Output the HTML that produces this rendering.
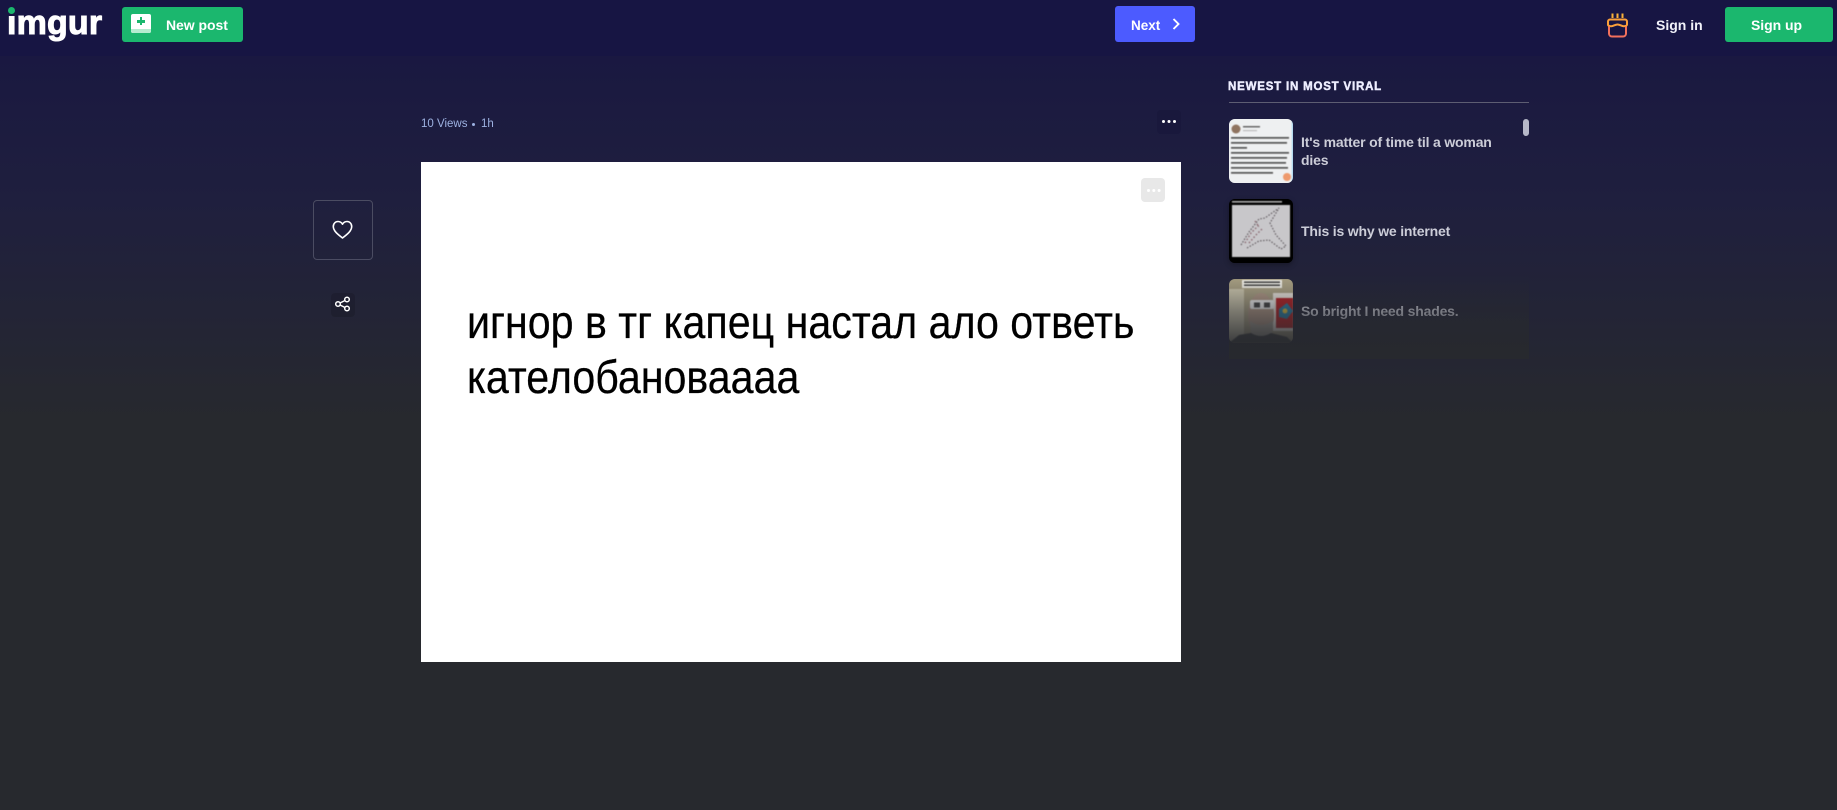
<!DOCTYPE html>
<html lang="en"><head><meta charset="utf-8"><title>imgur</title>
<style>
html,body{margin:0;padding:0;width:1837px;height:810px;overflow:hidden;background:#27292e}
body{position:relative;font-family:"Liberation Sans",sans-serif;color:#fff}
#bg{position:absolute;left:0;top:0;width:1837px;height:810px;background:linear-gradient(180deg,#171543 0,#1b1a40 90px,#1f1f3e 200px,#27292e 420px,#27292e 810px)}
#hdr{position:absolute;left:0;top:0;width:1837px;height:56px;background:#171543}
.a{position:absolute}
.btn{position:absolute;border-radius:3px;font-weight:700;font-size:14px;letter-spacing:-.1px}
.g{background:#1bb76e}
.t{position:absolute;white-space:nowrap;font-weight:700}
.thumb{position:absolute;left:1229px;width:64px;height:64px;border-radius:6px;overflow:hidden}
.thumb svg{filter:blur(.55px);display:block}
.side{letter-spacing:-.18px;color:#cccdd8;font-size:14px;line-height:18px}
.img{left:467px;font-size:46px;line-height:55px;color:#000;white-space:nowrap;transform-origin:0 0;transform:scaleX(.895);-webkit-text-stroke:.25px #000}
</style></head><body>
<div id="bg"></div>
<div id="hdr"></div>

<!-- logo -->
<div class="t a" style="left:7px;top:1px;font-size:34px;line-height:44px;letter-spacing:.15px;-webkit-text-stroke:1px #fff">imgur</div>
<div class="a" style="left:5px;top:3px;width:11.500px;height:13px;background:#171543"></div>
<div class="a" style="left:8px;top:7px;width:7px;height:7px;border-radius:50%;background:#1bb76e"></div>

<!-- new post -->
<div class="btn g" style="left:122px;top:7px;width:121px;height:35px"></div>
<div class="a" style="left:131px;top:14px;width:20px;height:19px;background:#fff;border-radius:2px;overflow:hidden"><div class="a" style="left:0;top:15px;width:20px;height:4px;background:#b5ecd0"></div>
<div class="a" style="left:6px;top:6px;width:8px;height:2.600px;background:#1bb76e"></div><div class="a" style="left:8.700px;top:3.300px;width:2.600px;height:8px;background:#1bb76e"></div></div>
<div class="t" style="left:166px;top:17px;font-size:14px;line-height:17px;letter-spacing:-.05px">New post</div>

<!-- next -->
<div class="btn" style="left:1115px;top:6px;width:80px;height:36px;background:#4c5bff"></div>
<div class="t" style="left:1131px;top:17px;font-size:13.500px;line-height:17px">Next</div>
<svg class="a" style="left:1170px;top:17px" width="12" height="14" viewBox="0 0 12 14"><path d="M3.500 2 L8.500 7 L3.500 12" fill="none" stroke="#fff" stroke-width="1.900"/></svg>

<!-- cake -->
<svg class="a" style="left:1604px;top:11px" width="27" height="28" viewBox="0 0 27 28" fill="none">
<path d="M8.500 2.500v4.500M13.500 2.500v4.500M18.500 2.500v4.500" stroke="#f9b13a" stroke-width="2"/>
<path d="M6 8.500h15a2 2 0 0 1 2 2v3c0 1.300-1.500 1.700-3.200 1.700-2.300 0-4-1.700-6.300-1.700s-4 1.700-6.300 1.700c-1.700 0-3.200-.4-3.200-1.700v-3a2 2 0 0 1 2-2z" stroke="#f99f3a" stroke-width="2"/>
<path d="M5 15.500v7a3 3 0 0 0 3 3h11a3 3 0 0 0 3-3v-7" stroke="#f2705c" stroke-width="2"/>
</svg>

<div class="t" style="left:1656px;top:17px;font-size:14px;line-height:17px;color:#f2f2fa">Sign in</div>
<div class="btn g" style="left:1725px;top:7px;width:108px;height:35px"></div>
<div class="t" style="left:1751px;top:17px;font-size:14px;line-height:17px;letter-spacing:-.05px">Sign up</div>

<!-- left actions -->
<div class="a" style="left:313px;top:200px;width:58px;height:58px;border:1px solid #4b4c62;border-radius:4px"></div>
<svg class="a" style="left:332px;top:220px" width="21" height="20" viewBox="0 0 21 20"><path d="M10.500 18 C6 14.500 1.300 11 1.300 6.500 C1.300 3.500 3.500 1.500 6 1.500 C8 1.500 9.500 2.500 10.500 4.200 C11.500 2.500 13 1.500 15 1.500 C17.500 1.500 19.700 3.500 19.700 6.500 C19.700 11 15 14.500 10.500 18 Z" fill="none" stroke="#fff" stroke-width="1.600" stroke-linejoin="round"/></svg>
<div class="a" style="left:331px;top:293px;width:24px;height:24px;background:rgba(0,0,0,.12);border-radius:4px"></div>
<svg class="a" style="left:334px;top:295px" width="18" height="18" viewBox="0 0 18 18" fill="none" stroke="#fff" stroke-width="1.500"><circle cx="4" cy="9" r="2.300"/><circle cx="13" cy="4.500" r="2.300"/><circle cx="13" cy="13.500" r="2.300"/><path d="M6 8 L11 5.500M6 10 L11 12.500"/></svg>

<!-- meta -->
<div class="a" style="left:421px;top:117px;font-size:11.500px;line-height:15px;color:#9db2e2;white-space:nowrap">10 Views</div>
<div class="a" style="left:472px;top:123px;width:3px;height:3px;border-radius:50%;background:#9db2e2"></div>
<div class="a" style="left:481px;top:117px;font-size:11.500px;line-height:15px;color:#9db2e2">1h</div>

<!-- more -->
<div class="a" style="left:1157px;top:110px;width:24px;height:24px;background:#19183c;border-radius:4px"></div>
<div class="a" style="left:1162px;top:120px;width:3px;height:3px;background:#fff;border-radius:50%;box-shadow:5.500px 0 0 #fff,11px 0 0 #fff"></div>

<!-- image -->
<div class="a" style="left:421px;top:162px;width:760px;height:500px;background:#fff"></div>
<div class="a" style="left:1141px;top:178px;width:24px;height:24px;background:#e8e8e8;border-radius:4px"></div>
<div class="a" style="left:1147px;top:188.500px;width:3px;height:3px;background:#fff;border-radius:50%;box-shadow:5.300px 0 0 #fff,10.600px 0 0 #fff"></div>
<div class="a img" style="top:295px">игнор в тг капец настал ало ответь</div>
<div class="a img" style="top:350px">кателобановаааа</div>

<!-- sidebar -->
<div class="t" style="left:1228px;top:80px;font-size:11.500px;line-height:14px;letter-spacing:.8px;color:#eef;-webkit-text-stroke:.45px #eef">NEWEST IN MOST VIRAL</div>
<div class="a" style="left:1229px;top:102px;width:300px;height:1px;background:#5d5d72"></div>
<div class="a" style="left:1523px;top:119px;width:6px;height:17px;border-radius:3px;background:#b6b8c8"></div>

<div class="thumb" style="top:119px;background:#eef0f1">
<svg width="64" height="64" viewBox="0 0 64 64"><rect width="64" height="64" fill="#eef0f1"/><circle cx="7" cy="10" r="4.500" fill="#8f7460"/><rect x="14" y="7" width="17" height="1.500" fill="#666"/><rect x="14" y="11" width="14" height="1.200" fill="#bbb"/>
<g fill="#555"><rect x="2" y="18" width="58" height="1.700"/><rect x="2" y="23" width="56" height="1.700"/><rect x="2" y="28" width="16" height="1.700"/><rect x="2" y="33" width="58" height="1.700"/><rect x="2" y="38" width="56" height="1.700"/><rect x="2" y="43" width="55" height="1.700"/><rect x="2" y="48" width="57" height="1.700"/><rect x="2" y="53" width="42" height="1.700"/></g>
<circle cx="58" cy="58" r="4" fill="#ee9a6e"/><rect x="63" y="0" width="1" height="64" fill="#8ccbee"/></svg></div>
<div class="t side" style="left:1301px;top:133px;width:200px;white-space:normal">It's matter of time til a woman dies</div>

<div class="thumb" style="top:199px;background:#000;box-shadow:0 2px 6px rgba(0,0,0,.3)">
<svg width="64" height="64" viewBox="0 0 64 64"><rect width="64" height="64" fill="#000"/><rect x="3" y="2" width="50" height="1.600" fill="#aaa"/><rect x="3" y="6" width="58" height="52" fill="#c8c7ca"/>
<path d="M12 46 L20 33 L30 20 L36 19 L50 9 L41 24 L47 36 L57 47 L52 50 L40 41 L30 42 L18 49" fill="none" stroke="#666065" stroke-width="1.200" stroke-dasharray="1.500 1.500"/>
<path d="M16 44 L22 34 L30 26 M20 44 L27 36 L33 30 M26 22 L30 28" fill="none" stroke="#8a6a72" stroke-width="1.400" stroke-dasharray="1.500 2"/></svg></div>
<div class="t side" style="left:1301px;top:222px">This is why we internet</div>

<div class="thumb" style="top:279px;background:#8e8872">
<svg width="64" height="64" viewBox="0 0 64 64"><rect width="64" height="64" fill="#aaa184"/><rect x="0" y="10" width="15" height="54" fill="#cfc9b0"/><rect x="44" y="14" width="20" height="38" fill="#eee8e0"/><rect x="47" y="19" width="17" height="30" fill="#b81f24"/><path d="M50 30l8-6 6 8-6 8-8-2z" fill="#2a7fa5"/><circle cx="56" cy="32" r="2.500" fill="#e0c040"/><rect x="13" y="1" width="40" height="8" fill="#f8f6ee"/><rect x="15" y="2.500" width="36" height="1.400" fill="#333"/><rect x="15" y="5.500" width="36" height="1.400" fill="#333"/>
<ellipse cx="32" cy="36" rx="13" ry="22" fill="#b39a88"/><path d="M21 42 Q32 50 44 42 L43 54 Q32 64 22 54Z" fill="#a8a296"/><rect x="21" y="21" width="24" height="9" rx="2" fill="#f4f4f4"/><rect x="25" y="23.500" width="6" height="5" fill="#444"/><rect x="35" y="23.500" width="6" height="5" fill="#444"/><path d="M0 64 L10 56 L22 54 Q32 60 42 54 L58 58 L64 64Z" fill="#3c3c3e"/></svg></div>
<div class="t side" style="left:1301px;top:302px">So bright I need shades.</div>

<!-- fade -->
<div class="a" style="left:1229px;top:275px;width:300px;height:84px;background:linear-gradient(180deg,rgba(39,41,46,0) 0,rgba(39,41,46,.5) 43%,rgba(39,41,46,.92) 85%,rgba(39,41,46,1) 100%)"></div>
</body></html>
